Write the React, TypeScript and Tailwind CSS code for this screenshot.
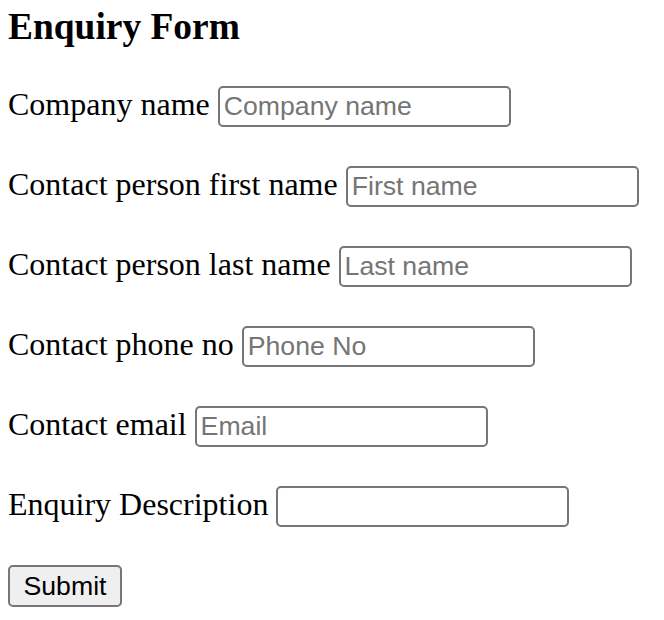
import { useState } from "react"

const fields = [
  { label: "Company name", placeholder: "Company name" },
  { label: "Contact person first name", placeholder: "First name" },
  { label: "Contact person last name", placeholder: "Last name" },
  { label: "Contact phone no", placeholder: "Phone No" },
  { label: "Contact email", placeholder: "Email" },
  { label: "Enquiry Description", placeholder: "" },
]

export default function App() {
  const [values, setValues] = useState<Record<string, string>>({})

  return (
    <div className="min-h-screen bg-white pl-[8px] text-black font-['Liberation_Serif',serif]">
      <h3 className="mt-[5px] text-[37.44px] leading-[43px] font-bold">Enquiry Form</h3>

      <form className="mt-[38px] flex flex-col items-start gap-[39px]" onSubmit={(e) => e.preventDefault()}>
        {fields.map((f) => (
          <div key={f.label} className="flex items-baseline gap-[8px]">
            <label className="text-[32px] leading-[37px]">{f.label}</label>
            <input
              type="text"
              placeholder={f.placeholder}
              value={values[f.label] || ""}
              onChange={(e) => setValues({ ...values, [f.label]: e.target.value })}
              className="h-[41px] w-[293px] rounded-[5px] border-2 border-[#767676] bg-white px-[4px] text-[26.67px] font-['Liberation_Sans',sans-serif] text-black placeholder:text-[#757575] outline-none"
            />
          </div>
        ))}
        <button
          type="submit"
          className="-mt-[1px] h-[42px] w-[114px] rounded-[5px] border-2 border-[#767676] bg-[#efefef] text-[26.67px] leading-none font-['Liberation_Sans',sans-serif] text-black"
        >
          Submit
        </button>
      </form>
    </div>
  )
}
